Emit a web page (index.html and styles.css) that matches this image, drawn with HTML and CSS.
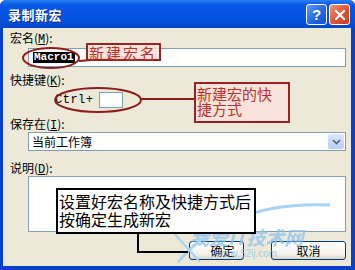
FILE: index.html
```html
<!DOCTYPE html>
<html lang="zh-CN">
<head>
<meta charset="UTF-8">
<title>录制新宏</title>
<link rel="stylesheet" href="styles.css">
</head>
<body>
<div class="window">
    <div class="titlebar">
        <span class="title">录制新宏</span>
        <div class="title-buttons">
            <span class="tbtn help">?</span>
            <span class="tbtn close">
                <svg width="12" height="12" viewBox="0 0 12 12"><path d="M2 2 L10 10 M10 2 L2 10" stroke="#fff" stroke-width="2.2" stroke-linecap="round"/></svg>
            </span>
        </div>
    </div>
    <div class="dialog">
        <div class="label first">宏名(<u>M</u>):</div>
        <div class="field name-field"><span class="selected">Macro1</span></div>
        <div class="label second">快捷键(<u>K</u>):</div>
        <div class="shortcut"><span class="ctrl">Ctrl+</span><span class="keybox"></span></div>
        <div class="label third">保存在(<u>I</u>):</div>
        <div class="field select">
            <span>当前工作簿</span>
            <span class="arrow">
                <svg width="9" height="6" viewBox="0 0 9 6"><path d="M1 1 L4.5 4.5 L8 1" fill="none" stroke="#4d6185" stroke-width="1.6"/></svg>
            </span>
        </div>
        <div class="label fourth">说明(<u>D</u>):</div>
        <div class="field desc"></div>
        <div class="buttons">
            <button class="btn ok">确定</button>
            <button class="btn cancel">取消</button>
        </div>
    </div>

    <!-- annotations drawn over the dialog -->
    <div class="watermark">
        <span class="wm-big">我爱IT技术网</span>
        <span class="wm-small">www.52ij.com</span>
    </div>
    <svg class="marks" width="355" height="270" viewBox="0 0 355 270">
        <path d="M178 262 Q230 200 330 205" fill="none" stroke="#a9d3f0" stroke-width="3"/>
        <path d="M150 205 Q175 235 200 262" fill="none" stroke="#a9d3f0" stroke-width="2"/>
        <ellipse cx="51" cy="58" rx="28" ry="10" fill="none" stroke="#8e1c1c" stroke-width="2"/>
        <line x1="79" y1="61" x2="128" y2="57" stroke="#8e1c1c" stroke-width="2"/>
        <ellipse cx="98" cy="100" rx="43" ry="12" fill="none" stroke="#8e1c1c" stroke-width="2"/>
        <line x1="141" y1="99" x2="195" y2="99" stroke="#8e1c1c" stroke-width="2"/>
    </svg>
    <div class="callout name-note">新建宏名</div>
    <div class="callout key-note">新建宏的快<br>捷方式</div>
    <div class="tip-tail"></div>
    <div class="tip">设置好宏名称及快捷方式后<br>按确定生成新宏</div>
</div>
</body>
</html>
```

FILE: styles.css
```css
body {
    margin: 0;
    padding: 0;
    font-family: "Noto Sans CJK SC", "Liberation Sans", sans-serif;
    font-size: 12px;
    background-color: #fff;
}

.window {
    position: relative;
    width: 355px;
    height: 270px;
    display: flex;
    flex-direction: column;
    background-color: #0a3fc9;
    border-radius: 6px 6px 0 0;
    overflow: hidden;
}

.titlebar {
    height: 28px;
    display: flex;
    align-items: center;
    justify-content: space-between;
    padding: 0 5px 0 8px;
    background: linear-gradient(#2b7ef6, #0758e6 18%, #0453e0 70%, #0446c9);
    flex-shrink: 0;
}

.title {
    color: #fff;
    font-weight: bold;
    font-size: 13px;
    letter-spacing: 0.5px;
    text-shadow: 1px 1px 0 #0a2a8a;
}

.title-buttons {
    display: flex;
    gap: 2px;
    margin-top: 1px;
}

.tbtn {
    width: 19px;
    height: 19px;
    border: 1px solid #fff;
    border-radius: 3px;
    display: flex;
    align-items: center;
    justify-content: center;
    color: #fff;
    font-family: "Liberation Sans", sans-serif;
    font-weight: bold;
    font-size: 15px;
}

.help {
    background: linear-gradient(135deg, #5d9bff, #1f62e8 60%, #1a4fd0);
}

.close {
    background: linear-gradient(135deg, #f0987a, #e0512f 55%, #c8401f);
}

.dialog {
    flex: 1;
    margin: 0 4px 4px 3px;
    padding: 0 5px 0 7px;
    background-color: #ece9d8;
    display: flex;
    flex-direction: column;
}

.label {
    height: 14px;
    line-height: 14px;
    color: #000;
}

.label u {
    font-family: "Liberation Mono", monospace;
}

.first { margin-top: 3px; }
.second { margin-top: 6px; }
.third { margin-top: 10px; }
.fourth { margin-top: 10px; }

.field {
    margin-left: 18px;
    background-color: #fff;
    border: 1px solid #7f9db9;
    box-sizing: border-box;
}

.name-field {
    margin-top: 3px;
    height: 19px;
    display: flex;
    align-items: center;
    padding-left: 4px;
}

.selected {
    background-color: #000;
    color: #fff;
    font-family: "Liberation Mono", monospace;
    font-weight: bold;
    font-size: 11px;
    line-height: 11px;
    padding: 0 1px;
}

.shortcut {
    margin: 5px 0 0 45px;
    display: flex;
    align-items: center;
    height: 15px;
    gap: 5px;
}

.ctrl {
    font-family: "Liberation Mono", monospace;
    font-size: 12px;
    letter-spacing: 0.5px;
}

.keybox {
    width: 24px;
    height: 16px;
    background-color: #fff;
    border: 1px solid #7f9db9;
    box-sizing: border-box;
}

.select {
    margin-top: 1px;
    height: 19px;
    display: flex;
    align-items: center;
    justify-content: space-between;
    padding: 0 1px 0 3px;
}

.arrow {
    width: 16px;
    height: 15px;
    border-radius: 2px;
    background: linear-gradient(#dce6fd, #b9cdf7);
    display: flex;
    align-items: center;
    justify-content: center;
}

.desc {
    margin-top: 1px;
    height: 56px;
}

.buttons {
    margin-top: 9px;
    display: flex;
    justify-content: flex-end;
    gap: 27px;
}

.btn {
    height: 19px;
    padding: 0;
    border: 1px solid #003c74;
    border-radius: 3px;
    background: linear-gradient(#fff, #f3f2ec 70%, #d9d6c8);
    font-family: "Noto Sans CJK SC", sans-serif;
    font-size: 12px;
    line-height: 15px;
    color: #000;
}

.ok {
    width: 55px;
    padding-left: 12px;
}

.cancel {
    width: 75px;
}

.watermark {
    position: absolute;
    left: 190px;
    top: 226px;
    display: flex;
    flex-direction: column;
    align-items: center;
    color: #8cc2ec;
    opacity: 0.75;
}

.wm-big {
    font-size: 19px;
    font-weight: bold;
    font-style: italic;
    line-height: 22px;
}

.wm-small {
    font-family: "Liberation Sans", sans-serif;
    font-size: 10px;
    line-height: 12px;
}

.marks {
    position: absolute;
    left: 0;
    top: 0;
}

.callout {
    position: absolute;
    border: 2px solid #9b2222;
    background-color: rgba(252, 226, 218, 0.9);
    color: #c0302c;
    font-size: 15px;
    line-height: 15px;
    box-sizing: border-box;
    padding-left: 1px;
}

.name-note {
    left: 86px;
    top: 43px;
    width: 75px;
    height: 18px;
    letter-spacing: 2px;
}

.key-note {
    left: 194px;
    top: 82px;
    width: 96px;
    height: 41px;
    padding-top: 2px;
}

.tip {
    position: absolute;
    left: 56px;
    top: 188px;
    width: 200px;
    height: 46px;
    box-sizing: border-box;
    border: 2px solid #000;
    background-color: #fff;
    font-size: 16px;
    line-height: 18px;
    padding: 2px 0 0 1px;
    color: #000;
}

.tip-tail {
    position: absolute;
    left: 137px;
    top: 232px;
    width: 51px;
    height: 21px;
    box-sizing: border-box;
    border-left: 2px solid #000;
    border-bottom: 2px solid #000;
}
```
